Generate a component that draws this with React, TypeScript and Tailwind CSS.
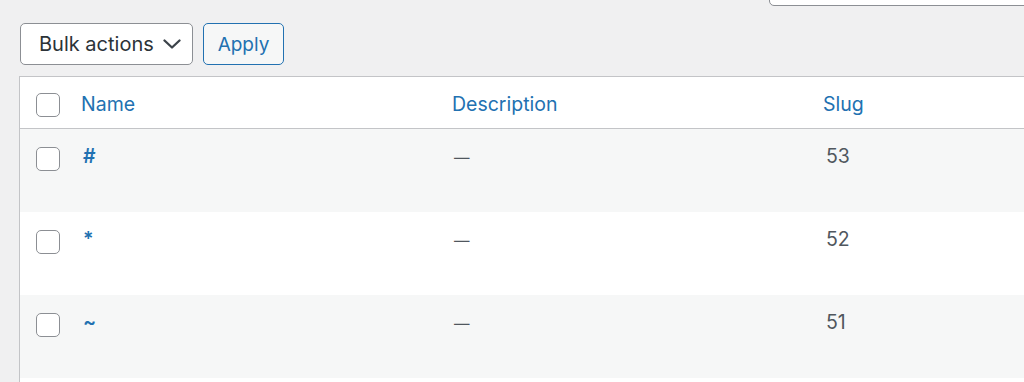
import React from "react";

const font = { fontFamily: "Inter, 'Noto Sans', sans-serif" };

function Checkbox() {
  return (
    <div className="w-[24px] h-[24px] rounded-[5px] border-[1.5px] border-[#8c8f94] bg-white shrink-0" />
  );
}

const rows = [
  { name: "#", slug: "53", bg: "bg-[#f6f7f7]" },
  { name: "*", slug: "52", bg: "bg-white" },
  { name: "~", slug: "51", bg: "bg-[#f6f7f7]" },
];

export default function App() {
  return (
    <div
      className="w-[1024px] h-[382px] overflow-hidden bg-[#f0f0f1] text-[#50575e]"
      style={font}
    >
      {/* search box peeking from top */}
      <div className="h-[6px] relative">
        <div className="absolute left-[769px] top-[-40px] w-[300px] h-[46px] bg-white border border-[#8c8f94] rounded-[5px]" />
      </div>

      {/* tablenav */}
      <div className="flex items-start gap-[10px] pl-[20px] pt-[17px] h-[70px]">
        <div className="w-[173px] h-[42px] rounded-[5px] border border-[#8c8f94] bg-white flex items-center justify-between pl-[18px] pr-[11px]">
          <span className="text-[20px] text-[#2c3338] leading-none">Bulk actions</span>
          <svg width="18" height="10" viewBox="0 0 18 10" fill="none">
            <polyline
              points="1.5,1.5 9,8.5 16.5,1.5"
              stroke="#3c434a"
              strokeWidth="2.3"
              strokeLinecap="round"
              strokeLinejoin="round"
            />
          </svg>
        </div>
        <div className="w-[81px] h-[42px] rounded-[5px] border border-[#2271b1] bg-[#f6f7f7] flex items-center justify-center">
          <span className="text-[19px] text-[#2271b1] leading-none">Apply</span>
        </div>
      </div>

      {/* table */}
      <div className="ml-[19px] w-[1030px] border border-[#c3c4c7] bg-white">
        <div className="grid grid-cols-[61px_371px_371px_1fr] h-[52px] border-b border-[#c3c4c7] bg-white">
          <div className="pl-[16px] pt-[16px]">
            <Checkbox />
          </div>
          <div className="pt-[13px] text-[19.5px] leading-[28px] text-[#2271b1]">Name</div>
          <div className="pt-[13px] text-[19.5px] leading-[28px] text-[#2271b1]">Description</div>
          <div className="pt-[13px] text-[19.5px] leading-[28px] text-[#2271b1]">Slug</div>
        </div>
        {rows.map((r) => (
          <div
            key={r.slug}
            className={`grid grid-cols-[61px_371px_371px_1fr] h-[83px] ${r.bg}`}
          >
            <div className="pl-[16px] pt-[18px]">
              <Checkbox />
            </div>
            <div className="pl-[2px] pt-[13px] text-[19.5px] leading-[28px] font-semibold text-[#2271b1]">
              {r.name}
            </div>
            <div className="pl-[2px] pt-[13px] text-[19.5px] leading-[28px] text-[#50575e]">
              <span className="text-[15.5px]">—</span>
            </div>
            <div className="pl-[3px] pt-[13px] text-[19.5px] leading-[28px] text-[#50575e]">{r.slug}</div>
          </div>
        ))}
        <div className="h-[40px] bg-white" />
      </div>
    </div>
  );
}
